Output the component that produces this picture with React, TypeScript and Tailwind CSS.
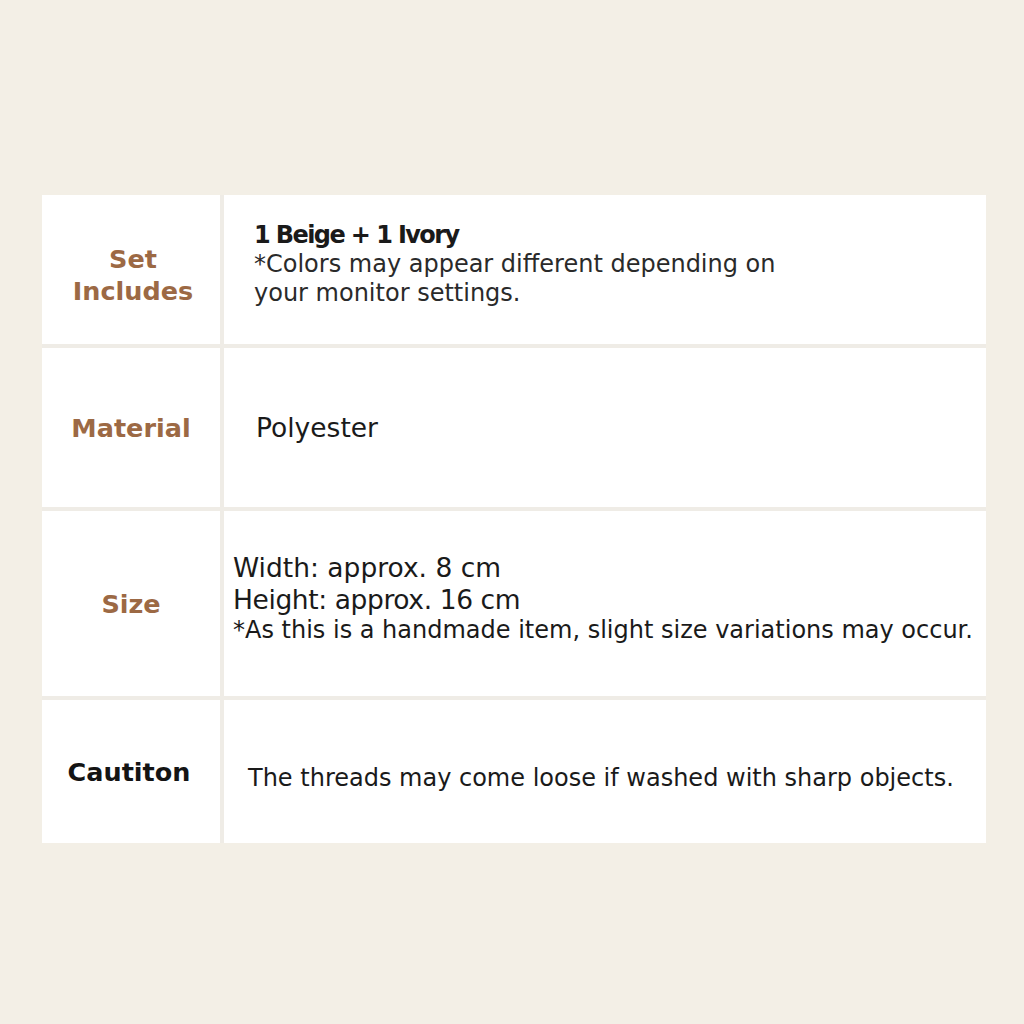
const label = "flex items-center justify-center bg-white text-center text-[25.5px] font-bold leading-[32px] text-[#9c6944]";
const cell = "flex flex-col justify-center bg-white text-[#1a1a1a]";

export default function App() {
  return (
    <div
      className="h-[1024px] w-[1024px] bg-[#f3efe6] pt-[195px] pl-[42px]"
      style={{ fontFamily: '"DejaVu Sans", "Liberation Sans", sans-serif' }}
    >
      <div className="grid w-[944px] grid-cols-[178px_762px] grid-rows-[149px_159px_185px_143px] gap-x-[4px] gap-y-[4px] bg-[#efece6]">
        <div className={label}>
          <span className="mt-[10px] ml-[4px]">Set<br />Includes</span>
        </div>
        <div className={cell + " pl-[30px] pb-[12px]"}>
          <p className="text-[24px] font-bold leading-[30px] tracking-[-1.6px]">1 Beige + 1 Ivory</p>
          <p className="text-[24px] leading-[29px] text-[#2a2a2a]">
            *Colors may appear different depending on<br />your monitor settings.
          </p>
        </div>

        <div className={label}>Material</div>
        <div className={cell + " pl-[32px]"}>
          <p className="text-[26.5px] leading-[32px]">Polyester</p>
        </div>

        <div className={label}>Size</div>
        <div className={cell + " pl-[9px] pb-[12px]"}>
          <p className="text-[26.5px] leading-[32px]">Width: approx. 8 cm</p>
          <p className="text-[26.5px] leading-[32px] tracking-[-0.4px]">Height: approx. 16 cm</p>
          <p className="text-[24px] leading-[28px]">*As this is a handmade item, slight size variations may occur.</p>
        </div>

        <div className={label + " text-[#141414]"}>
          <span className="mr-[4px]">Cautiton</span>
        </div>
        <div className={cell + " pl-[24px] pt-[12px]"}>
          <p className="text-[24px] leading-[30px]">The threads may come loose if washed with sharp objects.</p>
        </div>
      </div>
    </div>
  );
}
